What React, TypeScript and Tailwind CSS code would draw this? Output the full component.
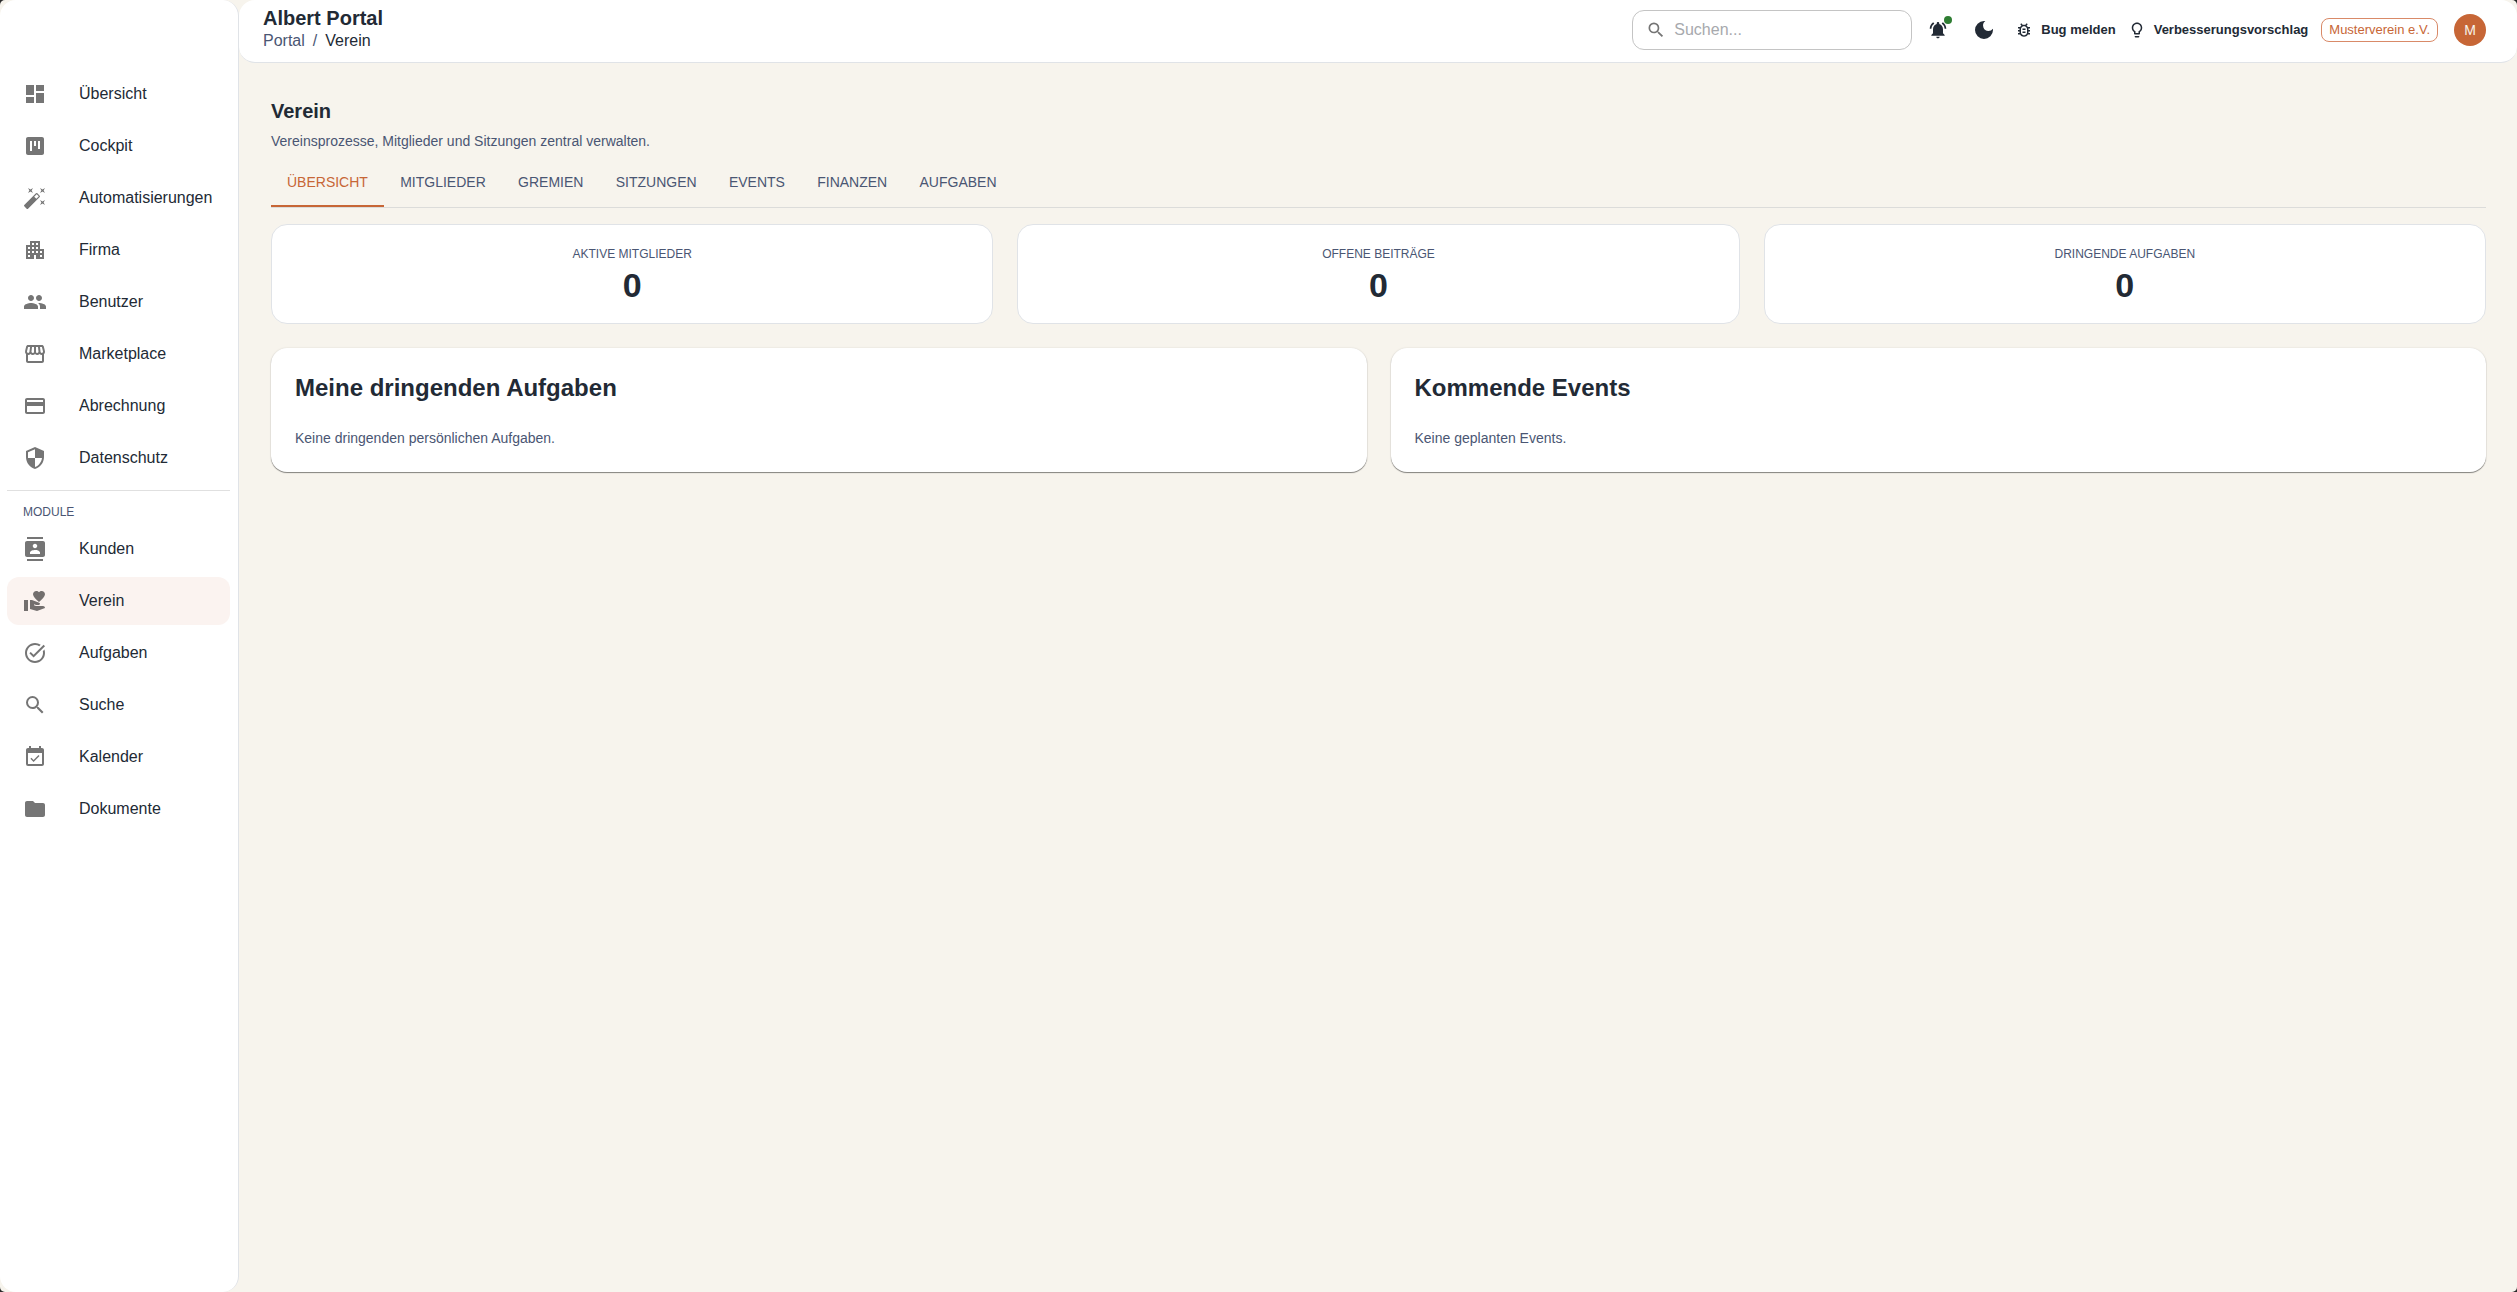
import type { ReactNode } from "react";
import type { IconType } from "react-icons";
import {
  MdApartment,
  MdAutoFixHigh,
  MdContacts,
  MdDarkMode,
  MdDashboard,
  MdEventAvailable,
  MdFolder,
  MdLightbulbOutline,
  MdNotificationsActive,
  MdOutlineBugReport,
  MdOutlineStorefront,
  MdPayment,
  MdPeople,
  MdSearch,
  MdSecurity,
  MdTaskAlt,
  MdViewKanban,
  MdVolunteerActivism,
} from "react-icons/md";

interface NavEntry {
  label: string;
  icon: IconType;
  active?: boolean;
}

const MAIN_NAV: NavEntry[] = [
  { label: "Übersicht", icon: MdDashboard },
  { label: "Cockpit", icon: MdViewKanban },
  { label: "Automatisierungen", icon: MdAutoFixHigh },
  { label: "Firma", icon: MdApartment },
  { label: "Benutzer", icon: MdPeople },
  { label: "Marketplace", icon: MdOutlineStorefront },
  { label: "Abrechnung", icon: MdPayment },
  { label: "Datenschutz", icon: MdSecurity },
];

const MODULE_NAV: NavEntry[] = [
  { label: "Kunden", icon: MdContacts },
  { label: "Verein", icon: MdVolunteerActivism, active: true },
  { label: "Aufgaben", icon: MdTaskAlt },
  { label: "Suche", icon: MdSearch },
  { label: "Kalender", icon: MdEventAvailable },
  { label: "Dokumente", icon: MdFolder },
];

const TABS = [
  "Übersicht",
  "Mitglieder",
  "Gremien",
  "Sitzungen",
  "Events",
  "Finanzen",
  "Aufgaben",
];

const STATS = [
  { label: "Aktive Mitglieder", value: 0 },
  { label: "Offene Beiträge", value: 0 },
  { label: "Dringende Aufgaben", value: 0 },
];

function NavList({ items }: { items: NavEntry[] }) {
  return (
    <ul className="flex flex-col gap-1">
      {items.map(({ label, icon: Icon, active }) => (
        <li key={label}>
          <a
            className={`flex h-12 items-center rounded-xl px-4 ${
              active ? "bg-[#fbf3f0]" : ""
            }`}
          >
            <Icon
              className={`size-6 shrink-0 ${
                active ? "text-[#736f6e]" : "text-[#757575]"
              }`}
            />
            <span className="ml-8 text-base">{label}</span>
          </a>
        </li>
      ))}
    </ul>
  );
}

function Sidebar() {
  return (
    <aside className="flex w-[239px] shrink-0 flex-col rounded-2xl border-r border-[#e0e3e7] bg-white pt-[70px] pr-2 pl-[7px]">
      <NavList items={MAIN_NAV} />
      <hr className="mt-2 border-[#e0e0e0]" />
      <p className="mt-3 mb-[3px] pl-4 text-xs leading-[19px] text-[#4a5673] uppercase">
        Module
      </p>
      <NavList items={MODULE_NAV} />
    </aside>
  );
}

function Header() {
  return (
    <header className="flex h-[63px] items-center justify-between rounded-2xl border-b border-[#e0e3e7] bg-white pr-[31px] pl-6">
      <div className="self-start pt-1.5">
        <h1 className="text-xl leading-6 font-bold">Albert Portal</h1>
        <nav className="mt-px flex gap-2 text-base leading-5">
          <span className="text-[#4a5673]">Portal</span>
          <span className="text-[#4a5673]">/</span>
          <span>Verein</span>
        </nav>
      </div>

      <div className="flex items-center pb-0.5">
        {/* Search field */}
        <div className="flex h-10 w-[280px] items-center gap-2 rounded-xl border border-[#c4c4c4] px-[13px]">
          <MdSearch className="size-5 text-[#757575]" />
          <input
            className="min-w-0 flex-1 bg-transparent text-base outline-none placeholder:text-[#a7a9ad]"
            placeholder="Suchen..."
          />
        </div>

        <button className="relative ml-4">
          <MdNotificationsActive className="size-5" />
          <span className="absolute -top-1 -right-1 size-2 rounded-full bg-[#2e7d32]" />
        </button>
        <button className="ml-6">
          <MdDarkMode className="size-6" />
        </button>
        <button className="ml-[19px] flex items-center gap-2 text-[13px] font-bold">
          <MdOutlineBugReport className="size-[18px]" />
          Bug melden
        </button>
        <button className="ml-3 flex items-center gap-2 text-[13px] font-bold">
          <MdLightbulbOutline className="size-[18px]" />
          Verbesserungsvorschlag
        </button>

        <span className="ml-[13px] flex h-6 items-center rounded-lg border border-[#d98a68] px-[7px] text-[13px] text-[#c76636]">
          Musterverein e.V.
        </span>
        <span className="ml-4 flex size-8 items-center justify-center rounded-full bg-[#c76636] text-sm text-[#f7f3ec]">
          M
        </span>
      </div>
    </header>
  );
}

function TabBar() {
  return (
    <div className="flex h-[51px] gap-[0.3px] border-b border-[#dcdcda]">
      {TABS.map((tab, i) => (
        <button
          key={tab}
          className={`flex items-center border-b-2 px-4 pt-0.5 text-sm uppercase ${
            i === 0
              ? "border-[#c76636] text-[#c76636]"
              : "border-transparent text-[#4a5673]"
          }`}
        >
          {tab}
        </button>
      ))}
    </div>
  );
}

function Panel({ title, children }: { title: string; children: ReactNode }) {
  return (
    <section className="h-[124px] rounded-2xl bg-white px-6 pt-6 shadow-[0_1px_1px_rgba(0,0,0,0.45),0_0_2px_rgba(0,0,0,0.12)]">
      <h3 className="text-2xl leading-8 font-bold">{title}</h3>
      <p className="mt-6 text-sm text-[#4a5673]">{children}</p>
    </section>
  );
}

export default function App() {
  return (
    <div className="h-screen bg-[#2b2b2b] font-['Liberation_Sans',Arial,sans-serif] text-[#222a35]">
      <div className="flex h-full overflow-hidden rounded-[5px] bg-[#f7f4ed]">
        <Sidebar />
        <div className="flex min-w-0 flex-1 flex-col">
          <Header />
          <main className="flex flex-col pt-8 pr-[31px] pl-8">
            <h2 className="text-xl leading-8 font-bold">Verein</h2>
            <p className="mt-1 mb-[6px] text-sm text-[#4a5673]">
              Vereinsprozesse, Mitglieder und Sitzungen zentral verwalten.
            </p>
            <TabBar />

            <div className="mt-4 grid grid-cols-3 gap-6">
              {STATS.map((stat) => (
                <div
                  key={stat.label}
                  className="flex h-[100px] flex-col items-center rounded-2xl border border-[#e0e3e7] bg-white pt-[19px]"
                >
                  <p className="text-xs leading-5 text-[#4a5673] uppercase">
                    {stat.label}
                  </p>
                  <p className="mt-px text-[34px] leading-10 font-bold">
                    {stat.value}
                  </p>
                </div>
              ))}
            </div>

            <div className="mt-6 grid grid-cols-2 gap-6">
              <Panel title="Meine dringenden Aufgaben">
                Keine dringenden persönlichen Aufgaben.
              </Panel>
              <Panel title="Kommende Events">Keine geplanten Events.</Panel>
            </div>
          </main>
        </div>
      </div>
    </div>
  );
}
